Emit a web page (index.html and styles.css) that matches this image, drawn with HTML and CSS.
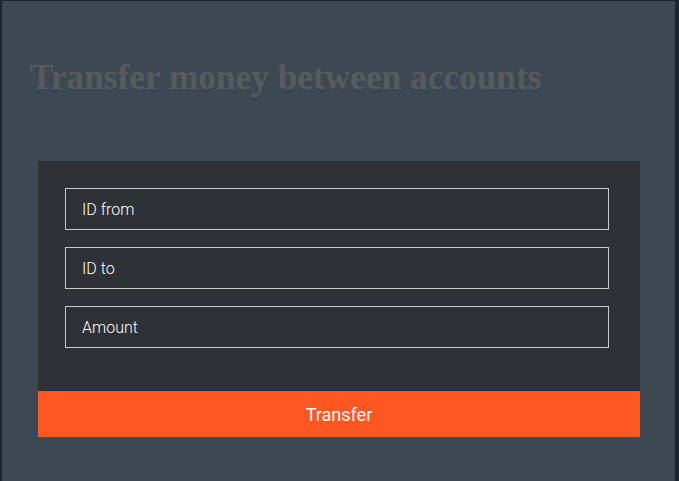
FILE: index.html
```html
<!DOCTYPE html>
<html>
<head>
<meta charset="utf-8">
<link rel="stylesheet" href="styles.css">
</head>
<body>
<div class="page">
  <h1 class="title">Transfer money between accounts</h1>
  <form class="panel">
    <div class="fields">
      <input class="field" type="text" placeholder="ID from">
      <input class="field" type="text" placeholder="ID to">
      <input class="field" type="text" placeholder="Amount">
    </div>
    <button class="submit" type="button">Transfer</button>
  </form>
</div>
</body>
</html>
```
FILE: styles.css
```css
html, body {
  margin: 0;
  height: 100%;
}
body {
  background: #1b2630;
  padding: 1px 4px 0 2px;
  box-sizing: border-box;
}
.page {
  background: #3e4852;
  height: 100%;
  padding: 1px 0 0 29px;
  box-sizing: border-box;
}
.title {
  margin: 56px 0 0 -1px;
  font-family: "Liberation Serif", serif;
  font-weight: bold;
  font-size: 35.3px;
  line-height: 40px;
  color: #575b60;
}
.panel {
  margin: 63px 0 0 7px;
  width: 602px;
  background: #2e3136;
  display: flex;
  flex-direction: column;
}
.fields {
  padding: 27px 31px 43px 27px;
  display: flex;
  flex-direction: column;
  gap: 17px;
}
.field {
  height: 42px;
  box-sizing: border-box;
  border: 1px solid #c9c9c9;
  background: #2e3136;
  padding: 0 16px;
  font-family: Roboto, sans-serif;
  font-weight: 300;
  font-size: 16px;
  color: #fff;
  outline: none;
}
.field::placeholder {
  color: #ffffff;
  opacity: 1;
}
.submit {
  height: 46px;
  border: none;
  background: #ff5722;
  color: #fff;
  font-family: Roboto, sans-serif;
  font-size: 18px;
  font-weight: 400;
  padding: 0;
}
```
